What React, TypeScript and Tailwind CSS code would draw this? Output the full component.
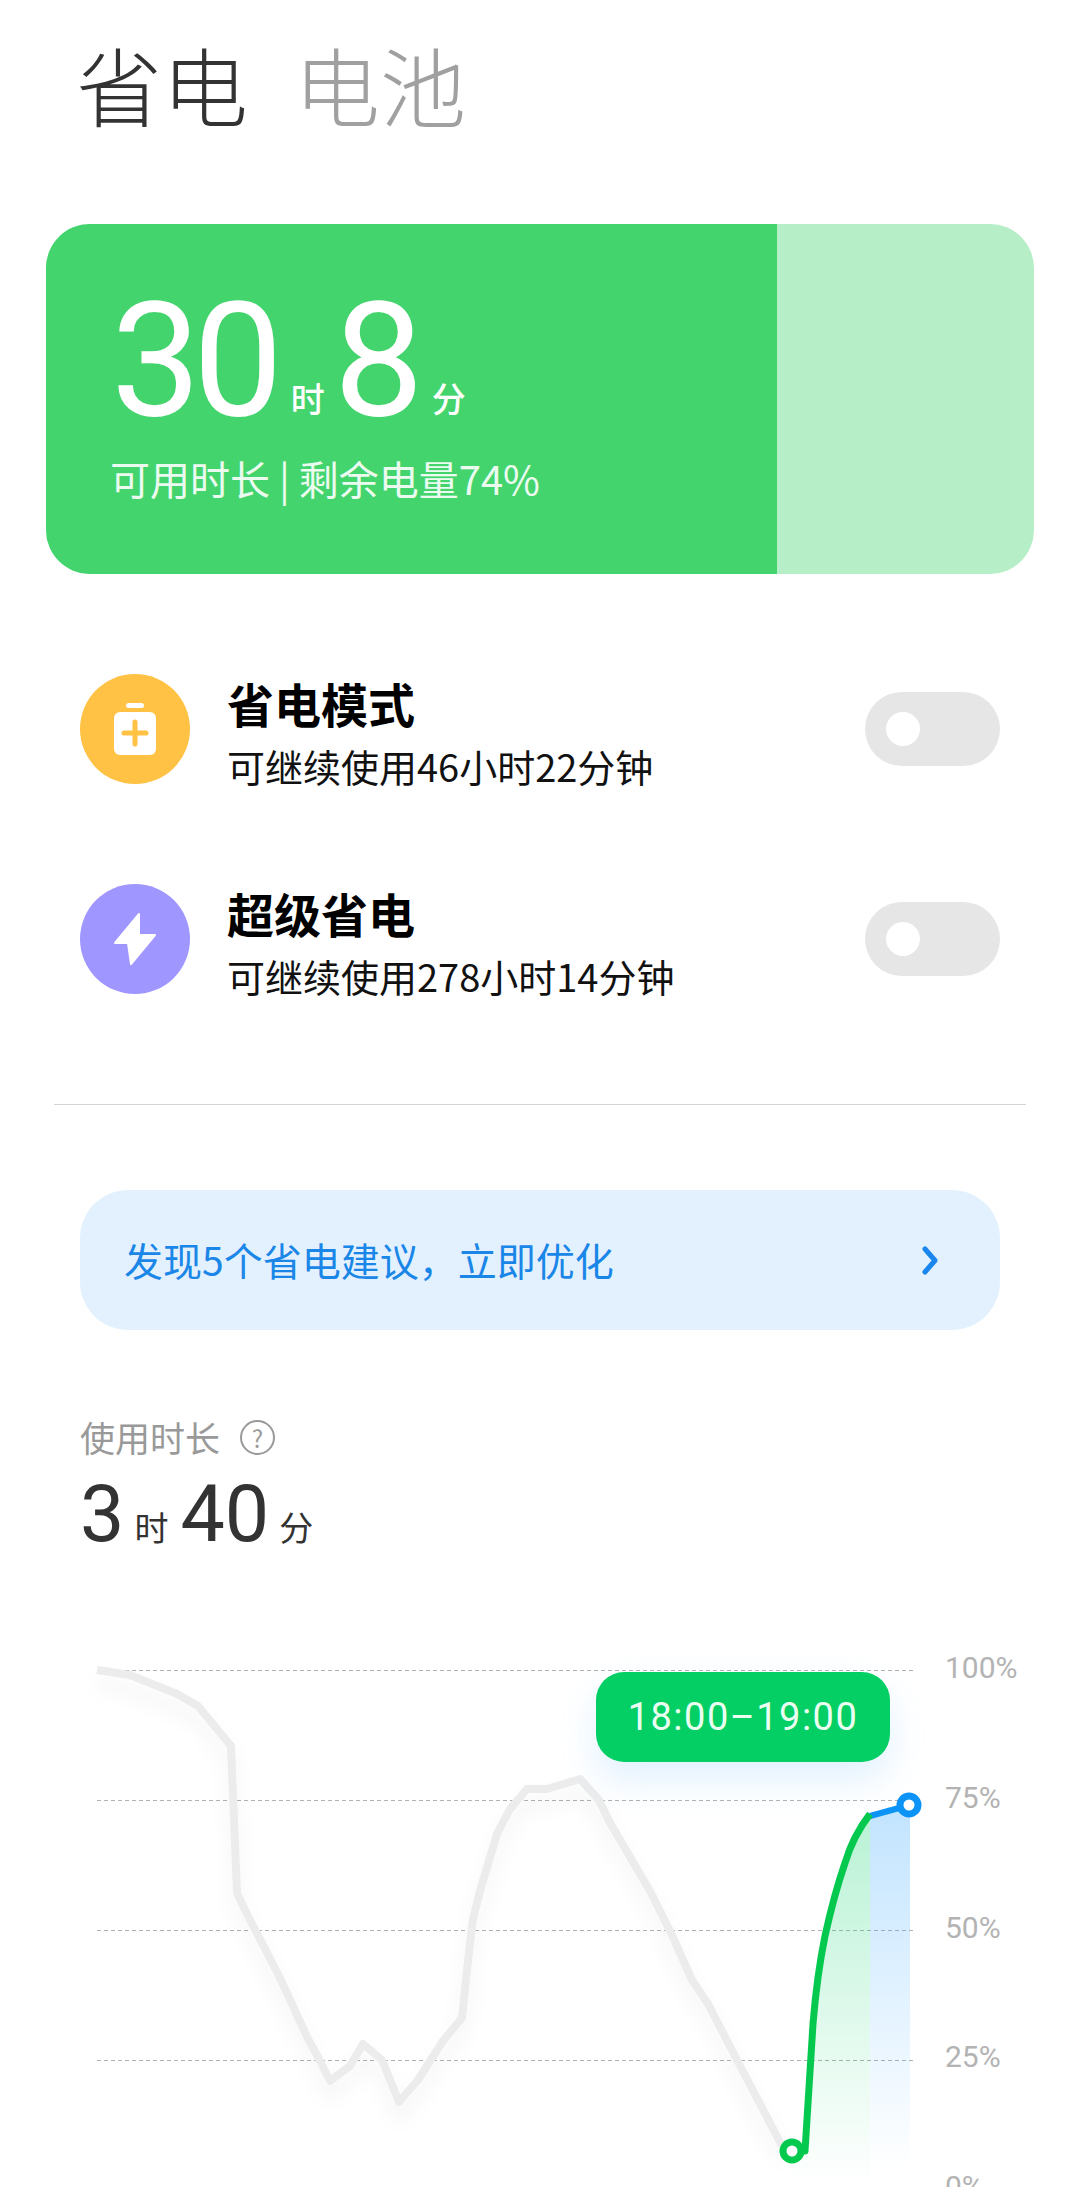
import React from "react";

const CJK = "font-['Noto_Sans_CJK_SC','Noto_Sans',sans-serif]";

const grayLine =
  "97,1670 130,1675 177,1694 198,1706 231,1746 237,1893 247,1914 280,1978 308,2039 318,2057 330,2081 350,2066 363,2044 382,2060 399,2102 418,2080 443,2041 462,2018 468,1961 473,1919 480,1891 497,1834 510,1809 527,1789 547,1789 580,1779 599,1800 609,1821 651,1893 671,1933 692,1980 708,2004 737,2060 782,2146";
const greenLine =
  "M793 2151 L805 2151 L813 2024 Q817 1975 825 1936 Q834 1895 845 1863 Q853 1836 870 1814";
const greenFill =
  "M793 2151 L805 2151 L813 2024 Q817 1975 825 1936 Q834 1895 845 1863 Q853 1836 870 1814 L870 2187 L793 2187 Z";

const Row = ({
  title,
  sub,
  color,
  icon,
}: {
  title: string;
  sub: string;
  color: string;
  icon: React.ReactNode;
}) => (
  <div className="flex items-center h-[110px] pl-[80px] pr-[80px]">
    <div className={`w-[110px] h-[110px] rounded-full shrink-0 ${color}`}>{icon}</div>
    <div className="ml-[37px] flex-1 flex flex-col pt-[8px]">
      <span className="text-[47px] leading-[58px] font-semibold text-black">{title}</span>
      <span className="text-[38px] leading-[52px] mt-[8px] text-[#111]">{sub}</span>
    </div>
    <div className="w-[135px] h-[74px] rounded-full bg-[#e6e6e6] flex items-center pl-[21px]">
      <div className="w-[34px] h-[34px] rounded-full bg-white" />
    </div>
  </div>
);

export default function App() {
  return (
    <div className={`w-[1080px] h-[2187px] overflow-hidden bg-white relative ${CJK}`}>
      {/* Tabs */}
      <div className="flex gap-[46px] pl-[76px] pt-[24px] text-[86px] leading-[120px] font-light">
        <span className="text-[#333]">省电</span>
        <span className="text-[#a0a0a0]">电池</span>
      </div>

      {/* Battery card */}
      <div className="mx-[46px] mt-[80px] h-[350px] rounded-[44px] overflow-hidden bg-[#b5eec7]">
        <div className="w-[731px] h-full bg-[#43d46d] pl-[64px] pt-[72px] text-white">
          <div className="flex items-baseline h-[130px] pl-[1px]">
            <span className="font-['Roboto',sans-serif] text-[160px] leading-[130px] tracking-[-8px]">30</span>
            <span className="text-[34px] font-medium ml-[16px] -translate-y-[3px]">时</span>
            <span className="font-['Roboto',sans-serif] text-[160px] leading-[130px] ml-[9px] tracking-[-8px]">8</span>
            <span className="text-[34px] font-medium ml-[16px] -translate-y-[3px]">分</span>
          </div>
          <div className="mt-[26px] text-[40px] leading-[52px] text-white/90">可用时长 | 剩余电量74%</div>
        </div>
      </div>

      {/* Modes */}
      <div className="mt-[100px]">
        <Row
          title="省电模式"
          sub="可继续使用46小时22分钟"
          color="bg-[#ffc244]"
          icon={
            <svg viewBox="0 0 110 110" className="w-full h-full">
              <rect x="46" y="29" width="18" height="5" rx="2.5" fill="#fff" />
              <rect x="34" y="38" width="42" height="43" rx="6" fill="#fff" />
              <path d="M44 59H66M55 48V70" stroke="#ffc244" strokeWidth="5" strokeLinecap="round" />
            </svg>
          }
        />
        <div className="h-[100px]" />
        <Row
          title="超级省电"
          sub="可继续使用278小时14分钟"
          color="bg-[#a096ff]"
          icon={
            <svg viewBox="0 0 110 110" className="w-full h-full">
              <path
                d="M59 30L35 59H48L51 80L75 51H59Z"
                fill="#fff"
                stroke="#fff"
                strokeWidth="2"
                strokeLinejoin="round"
              />
            </svg>
          }
        />
      </div>

      <div className="mx-[54px] mt-[110px] h-[1px] bg-[#d4d4d4]" />

      {/* Suggestion banner */}
      <div className="mx-[80px] mt-[85px] h-[140px] rounded-[48px] bg-[#e3f1fe] flex items-center justify-between pl-[44px] pr-[62px]">
        <span className="text-[39px] leading-[52px] -translate-y-[1px] text-[#1a86e8]">发现5个省电建议，立即优化</span>
        <svg viewBox="0 0 16 29" className="w-[16px] h-[29px]">
          <path d="M3 3L13 14.5L3 26" fill="none" stroke="#1a86ee" strokeWidth="5" strokeLinecap="round" strokeLinejoin="round" />
        </svg>
      </div>

      {/* Usage */}
      <div className="mt-[84px] pl-[80px]">
        <div className="flex items-center h-[46px]">
          <span className="text-[35px] text-[#999]">使用时长</span>
          <span className="ml-[20px] w-[35px] h-[35px] rounded-full border-2 border-[#999] text-[#999] text-[24px] leading-[31px] text-center">?</span>
        </div>
        <div className="flex items-baseline mt-[16px] text-[#333] h-[76px]">
          <span className="font-['Roboto',sans-serif] text-[79px] leading-[76px]">3</span>
          <span className="text-[34px] ml-[10px]">时</span>
          <span className="font-['Roboto',sans-serif] text-[79px] leading-[76px] ml-[12px]">40</span>
          <span className="text-[34px] ml-[10px]">分</span>
        </div>
      </div>

      {/* Chart */}
      <svg viewBox="0 1640 1080 547" className="absolute left-0 top-[1640px] w-[1080px] h-[547px]">
        <defs>
          <linearGradient id="greenFade" x1="0" y1="1814" x2="0" y2="2187" gradientUnits="userSpaceOnUse">
            <stop offset="0" stopColor="#04d167" stopOpacity="0.28" />
            <stop offset="1" stopColor="#04d167" stopOpacity="0" />
          </linearGradient>
          <linearGradient id="blueFade" x1="0" y1="1810" x2="0" y2="2170" gradientUnits="userSpaceOnUse">
            <stop offset="0" stopColor="#35a6ff" stopOpacity="0.3" />
            <stop offset="1" stopColor="#35a6ff" stopOpacity="0" />
          </linearGradient>
          <filter id="softDrop" x="-10%" y="-10%" width="120%" height="120%">
            <feDropShadow dx="0" dy="14" stdDeviation="9" floodColor="#000" floodOpacity="0.05" />
          </filter>
        </defs>
        {[1670, 1800, 1930, 2060].map((y) => (
          <line key={y} x1="97" x2="915" y1={y + 0.5} y2={y + 0.5} stroke="#b0b0b0" strokeWidth="1" strokeDasharray="4 3" />
        ))}
        <polyline points={grayLine} fill="none" stroke="#ececec" strokeWidth="8" strokeLinejoin="round" filter="url(#softDrop)" />
        <path d={greenFill} fill="url(#greenFade)" />
        <path d="M870 1816L910 1805V2187H870Z" fill="url(#blueFade)" />
        <path d="M870 1816L910 1805" stroke="#0b93f6" strokeWidth="6" fill="none" />
        <path d={greenLine} stroke="#05c94f" strokeWidth="7" fill="none" strokeLinejoin="round" />
        <circle cx="792" cy="2151" r="9" fill="#fff" stroke="#05c94f" strokeWidth="7" />
        <circle cx="909" cy="1805" r="9" fill="#fff" stroke="#0b93f6" strokeWidth="7" />
      </svg>

      {/* Tooltip */}
      <div className="absolute left-[596px] top-[1672px] w-[294px] h-[90px] rounded-[28px] bg-[#04cf64] flex items-center justify-center text-[#eafff2] text-[38px] font-['Roboto',sans-serif] tracking-[1.5px] shadow-[0_18px_36px_rgba(90,180,255,0.18)]">
        18:00–19:00
      </div>

      {/* Axis labels */}
      {[
        { t: "100%", y: 1647 },
        { t: "75%", y: 1777 },
        { t: "50%", y: 1907 },
        { t: "25%", y: 2036 },
        { t: "0%", y: 2166 },
      ].map((l) => (
        <span
          key={l.t}
          className="absolute left-[945px] text-[30px] leading-[42px] text-[#b3b3b3] font-['Roboto',sans-serif]"
          style={{ top: l.y }}
        >
          {l.t}
        </span>
      ))}
    </div>
  );
}
